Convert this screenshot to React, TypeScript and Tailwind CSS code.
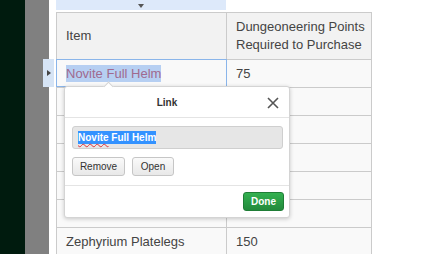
const rows = [
    { item: 'Novite Full Helm', points: '75' },
    { item: '', points: '' },
    { item: '', points: '' },
    { item: '', points: '' },
    { item: '', points: '' },
    { item: '', points: '' },
    { item: 'Zephyrium Platelegs', points: '150' },
];

export default function App() {
    return (
        <div className="relative flex h-[254px] w-[436px] overflow-hidden bg-white font-['Liberation_Sans',Arial,sans-serif] text-[#444]">
            <div className="w-[25px] shrink-0 bg-[#001b0e]" />
            <div className="w-[24px] shrink-0 bg-[#808080]" />

            <div className="pl-[7px]">
                <div className="flex h-[10px] w-[170px] items-center justify-center bg-[#dde9fa]">
                    <span className="mt-[1px] block h-0 w-0 border-x-[3px] border-t-[4px] border-x-transparent border-t-[#555]" />
                </div>

                <div className="mt-[2px] w-[316px] border-l border-t border-[#cbcbcb]">
                    <div className="flex">
                        <div className="flex h-[47px] w-[170px] items-center border-b border-r border-[#cbcbcb] bg-[#f2f2f2] pl-[9px] text-[13px]">
                            Item
                        </div>
                        <div className="flex h-[47px] w-[145px] items-center border-b border-r border-[#cbcbcb] bg-[#f2f2f2] pl-[9px] text-[13px] leading-[18px]">
                            Dungeoneering Points
                            <br />
                            Required to Purchase
                        </div>
                    </div>

                    {rows.map((row, i) => (
                        <div key={i} className="flex">
                            <div className="relative flex h-[28px] w-[170px] items-center border-b border-r border-[#cbcbcb] bg-[#f9f9f9] pl-[9px] text-[13px]">
                                {i === 0 ? (
                                    <>
                                        <span className="bg-[#b6cff2] text-[#a06a8f] leading-[17px]">
                                            {row.item}
                                        </span>
                                        <div className="pointer-events-none absolute -left-px -top-px h-[28px] w-[171px] border border-[#8ab5ea]" />
                                        <div className="absolute -left-[14px] -top-px flex h-[28px] w-[11px] items-center justify-center bg-[#d6e4f5]">
                                            <span className="block h-0 w-0 border-y-[3px] border-l-[4px] border-y-transparent border-l-[#444]" />
                                        </div>
                                    </>
                                ) : (
                                    row.item
                                )}
                            </div>
                            <div className="flex h-[28px] w-[145px] items-center border-b border-r border-[#cbcbcb] bg-[#f9f9f9] pl-[9px] text-[13px]">
                                {row.points}
                            </div>
                        </div>
                    ))}
                </div>
            </div>

            <div className="absolute left-[64px] top-[86px] flex h-[132px] w-[226px] flex-col rounded-[3px] border border-[#d4d4d4] bg-white shadow-[0_1px_4px_rgba(0,0,0,0.2)]">
                <div className="absolute -top-[4px] left-[40px] h-[7px] w-[7px] rotate-45 border-l border-t border-[#d4d4d4] bg-white" />

                <div className="relative flex h-[31px] items-center border-b border-[#e4e4e4]">
                    <div className="flex-1 pr-[20px] text-center text-[10px] font-bold text-[#333]">
                        Link
                    </div>
                    <svg
                        className="absolute right-[10px] top-[10px] h-[12px] w-[12px]"
                        viewBox="0 0 12 12"
                        fill="none"
                        stroke="#555"
                        strokeWidth="1.6"
                    >
                        <path d="M1 1L11 11M11 1L1 11" />
                    </svg>
                </div>

                <div className="border-b border-[#e4e4e4] px-[7px] pb-[9px] pt-[8px]">
                    <div className="flex h-[23px] w-[211px] items-center rounded-[3px] border border-[#cfcfcf] bg-[#e6e6e6] pl-[5px]">
                        <span className="bg-[#3392ff] text-[10px] font-bold leading-[13px] text-white">
                            <span className="underline decoration-[#e0323a] decoration-wavy decoration-1 underline-offset-2">
                                Novite
                            </span>{' '}
                            Full Helm
                        </span>
                    </div>
                    <div className="mt-[8px] flex gap-[7px]">
                        <button
                            type="button"
                            className="h-[19px] w-[53px] rounded-[3px] border border-[#c6c6c6] bg-gradient-to-b from-[#fafafa] to-[#e8e8e8] text-[10px] text-[#333]"
                        >
                            Remove
                        </button>
                        <button
                            type="button"
                            className="h-[19px] w-[42px] rounded-[3px] border border-[#c6c6c6] bg-gradient-to-b from-[#fafafa] to-[#e8e8e8] text-[10px] text-[#333]"
                        >
                            Open
                        </button>
                    </div>
                </div>

                <div className="flex flex-1 items-start justify-end pr-[5px] pt-[6px]">
                    <button
                        type="button"
                        className="h-[19px] w-[41px] rounded-[3px] border border-[#1f7d36] bg-gradient-to-b from-[#33b150] to-[#238a3c] text-[10px] font-bold text-white"
                    >
                        Done
                    </button>
                </div>
            </div>
        </div>
    );
}
